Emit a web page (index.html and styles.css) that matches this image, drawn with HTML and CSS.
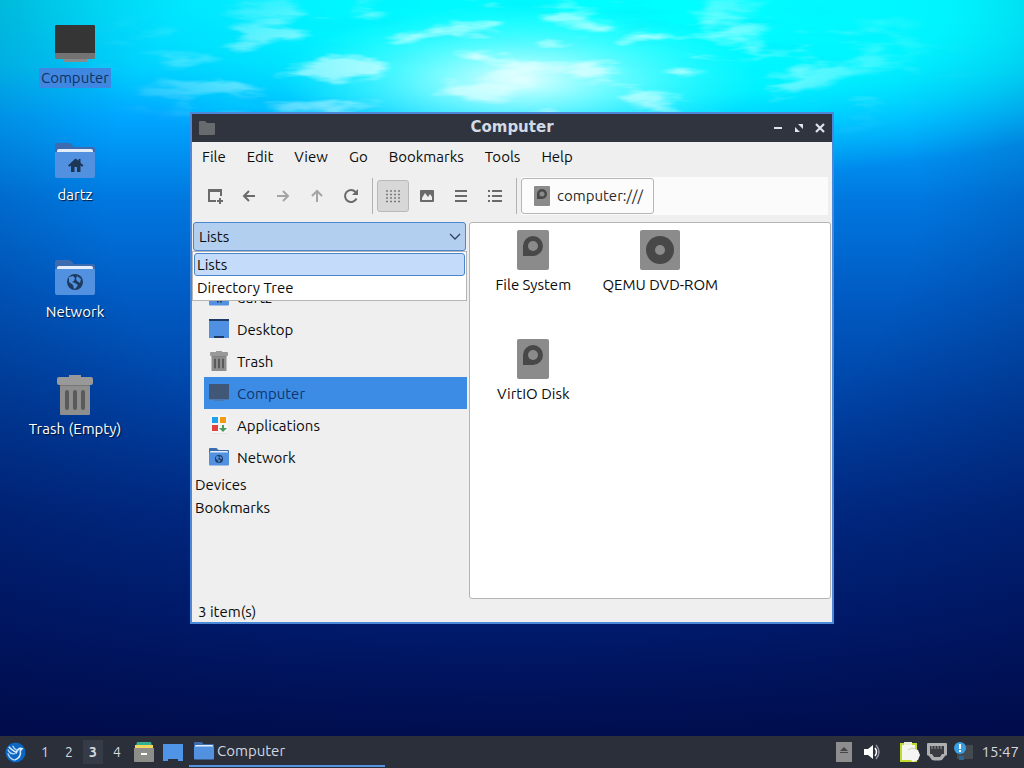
FILE: index.html
```html
<!DOCTYPE html>
<html lang="en">
<head>
<meta charset="utf-8">
<title>Computer</title>
<link rel="stylesheet" href="styles.css">
</head>
<body>
<svg class="sprite" aria-hidden="true">
  <symbol id="computer" viewBox="0 0 40 40">
    <rect x="9" y="35" width="23" height="3" fill="#8a8a8c"/>
    <rect y="1" width="40" height="34" rx="1" fill="#737374"/>
    <path d="M1 1h38l1 1v27H0V2z" fill="#353535"/>
  </symbol>
  <symbol id="folder" viewBox="0 0 40 40">
    <path d="M0 4q0-2 2-2h12q2 0 3 2l2 2h19q2 0 2 2v10H0z" fill="#3d6bb0"/>
    <path d="M2 10q0-2 2-2h32q2 0 2 2v4H2z" fill="#e4eefa"/>
    <path d="M0 11h40v24q0 2-2 2H2q-2 0-2-2z" fill="#5290e0"/>
  </symbol>
  <symbol id="home" viewBox="0 0 40 40">
    <use href="#folder"/>
    <path d="M20.500 17.500 13 24.500l1.500 1.300L16 24.500V31h3.500v-5h2.500v5h3.500v-6.500l1.500 1.300 1.500-1.300-3-2.800V18h-2v1.700z" fill="#1c3654"/>
  </symbol>
  <symbol id="net-folder" viewBox="0 0 40 40">
    <use href="#folder"/>
    <circle cx="20" cy="24" r="8" fill="#1c3a5e"/>
    <path d="M14 19l4-1 2 2-1 3-2 1 3 1 3 2-2 3-2 1-1-4-4-3zM22 18l4 3-1 4-3-2-1-2z" fill="#5290e0"/>
  </symbol>
  <symbol id="trash" viewBox="0 0 40 40">
    <path d="M14 0h12v3H14zM2 4q0-2 2-2h32q2 0 2 2v4q0 2-2 2H4q-2 0-2-2z" fill="#999"/>
    <path d="M5 10h30v29q0 1-1 1H6q-1 0-1-1z" fill="#8e8e8e"/>
    <path d="M5 10h30v1H5z" fill="#777"/>
    <path d="M12 17v16M20 17v16M28 17v16" stroke="#5a5a5a" stroke-width="4" stroke-linecap="round"/>
  </symbol>
  <symbol id="drive" viewBox="0 0 40 40">
    <rect x="4" width="32" height="40" rx="2" fill="#8b8b8b"/>
    <path d="M10 26V16a10 10 0 1 1 10 10z" fill="#484848"/>
    <circle cx="20" cy="16" r="5" fill="#8b8b8b"/>
  </symbol>
  <symbol id="disc" viewBox="0 0 40 40">
    <rect width="40" height="40" rx="2" fill="#8b8b8b"/>
    <circle cx="20" cy="20" r="14" fill="#484848"/>
    <circle cx="20" cy="20" r="5" fill="#8b8b8b"/>
  </symbol>
</svg>

<main class="desktop">
  <svg class="wallpaper" viewBox="0 0 1024 738" preserveAspectRatio="none" aria-hidden="true">
    <defs>
      <linearGradient id="sea" x1="0" y1="0" x2="0" y2="1">
        <stop offset="0" stop-color="#00e4ff"/>
        <stop offset=".09" stop-color="#00ccff"/>
        <stop offset=".16" stop-color="#00a6ff"/>
        <stop offset=".27" stop-color="#0078e0"/>
        <stop offset=".4" stop-color="#005cc4"/>
        <stop offset=".55" stop-color="#0042a4"/>
        <stop offset=".7" stop-color="#002c88"/>
        <stop offset=".86" stop-color="#001e74"/>
        <stop offset="1" stop-color="#001158"/>
      </linearGradient>
      <radialGradient id="aqua" gradientUnits="userSpaceOnUse" cx="0" cy="0" r="1" gradientTransform="translate(640 10) scale(620 170)">
        <stop offset="0" stop-color="#00ffff"/>
        <stop offset=".5" stop-color="#00f8ff" stop-opacity=".9"/>
        <stop offset="1" stop-color="#00e0ff" stop-opacity="0"/>
      </radialGradient>
      <radialGradient id="sun" gradientUnits="userSpaceOnUse" cx="0" cy="0" r="1" gradientTransform="translate(520 80) scale(240 76)">
        <stop offset="0" stop-color="#e4ffff"/>
        <stop offset=".35" stop-color="#a8ffff" stop-opacity=".7"/>
        <stop offset="1" stop-color="#50ffff" stop-opacity="0"/>
      </radialGradient>
      <radialGradient id="depth" gradientUnits="userSpaceOnUse" cx="0" cy="0" r="1" gradientTransform="translate(512 200) scale(900 700)">
        <stop offset=".45" stop-color="#00063c" stop-opacity="0"/>
        <stop offset="1" stop-color="#00063c" stop-opacity=".55"/>
      </radialGradient>
      <radialGradient id="reach" gradientUnits="userSpaceOnUse" cx="0" cy="0" r="1" gradientTransform="translate(520 64) scale(460 104)">
        <stop offset="0" stop-color="#fff"/>
        <stop offset=".5" stop-color="#aaa"/>
        <stop offset="1" stop-color="#000"/>
      </radialGradient>
      <mask id="surface"><rect width="1024" height="180" fill="url(#reach)"/></mask>
      <filter id="ripple" x="0" y="0" width="100%" height="100%">
        <feTurbulence type="fractalNoise" baseFrequency=".013 .05" numOctaves="5" seed="4"/>
        <feColorMatrix values="0 0 0 0 .75  0 0 0 0 1  0 0 0 0 1  5 0 0 0 -2.6"/>
        <feGaussianBlur stdDeviation="2 .8"/>
      </filter>
      <filter id="trough" x="0" y="0" width="100%" height="100%">
        <feTurbulence type="fractalNoise" baseFrequency=".012 .06" numOctaves="5" seed="21"/>
        <feColorMatrix values="0 0 0 0 0  0 0 0 0 .82  0 0 0 0 .95  4 0 0 0 -2"/>
        <feGaussianBlur stdDeviation="2 .8"/>
      </filter>
    </defs>
    <rect width="1024" height="738" fill="url(#sea)"/>
    <rect width="1024" height="738" fill="url(#depth)"/>
    <rect width="1024" height="180" fill="url(#aqua)"/>
    <g mask="url(#surface)">
      <rect width="1024" height="180" filter="url(#trough)" opacity=".5"/>
    </g>
    <rect width="1024" height="180" fill="url(#sun)"/>
    <g mask="url(#surface)">
      <rect width="1024" height="180" filter="url(#ripple)" opacity=".85"/>
    </g>
  </svg>

  <ul class="shortcuts">
    <li class="shortcut selected"><svg><use href="#computer"/></svg><span>Computer</span></li>
    <li class="shortcut"><svg><use href="#home"/></svg><span>dartz</span></li>
    <li class="shortcut"><svg><use href="#net-folder"/></svg><span>Network</span></li>
    <li class="shortcut"><svg><use href="#trash"/></svg><span>Trash (Empty)</span></li>
  </ul>

  <section class="window">
    <header class="titlebar">
      <svg class="app-icon" viewBox="0 0 16 16"><path d="M0 2q0-1 1-1h5l2 2h7q1 0 1 1v10q0 1-1 1H1q-1 0-1-1z" fill="#686b6e"/></svg>
      <h1>Computer</h1>
      <div class="controls">
        <button aria-label="Minimize"><svg viewBox="0 0 10 10"><path d="M1 5h8" stroke="#dfe3ea" stroke-width="2"/></svg></button>
        <button aria-label="Maximize"><svg viewBox="0 0 10 10"><path d="M4 1h5v5zM1 4v5h5z" fill="#dfe3ea"/></svg></button>
        <button aria-label="Close"><svg viewBox="0 0 10 10"><path d="M1 1l8 8M9 1L1 9" stroke="#dfe3ea" stroke-width="2.200"/></svg></button>
      </div>
    </header>

    <nav class="menubar">
      <button>File</button><button>Edit</button><button>View</button><button>Go</button><button>Bookmarks</button><button>Tools</button><button>Help</button>
    </nav>

    <div class="toolbar">
      <button class="tool" aria-label="New tab"><svg viewBox="0 0 16 16"><path d="M14 8V2H2v11h7" fill="none" stroke="#6a6a6a" stroke-width="2"/><path d="M1 1h14v3H1z" fill="#6a6a6a"/><path d="M13 10v6M10 13h6" stroke="#6a6a6a" stroke-width="2"/></svg></button>
      <button class="tool" aria-label="Back"><svg viewBox="0 0 16 16"><path d="M14 8H3M8 3L3 8l5 5" fill="none" stroke="#6a6a6a" stroke-width="2"/></svg></button>
      <button class="tool" aria-label="Forward"><svg viewBox="0 0 16 16"><path d="M2 8h11M8 3l5 5-5 5" fill="none" stroke="#a4a4a4" stroke-width="2"/></svg></button>
      <button class="tool" aria-label="Up"><svg viewBox="0 0 16 16"><path d="M8 14V3M3 8l5-5 5 5" fill="none" stroke="#a4a4a4" stroke-width="2"/></svg></button>
      <button class="tool" aria-label="Reload"><svg viewBox="0 0 16 16"><path d="M13.500 10.500A6 6 0 1 1 12.500 4" fill="none" stroke="#6a6a6a" stroke-width="2"/><path d="M15 1v6H9z" fill="#6a6a6a"/></svg></button>
      <span class="divider"></span>
      <button class="tool active" aria-label="Icon view"><svg viewBox="0 0 16 16"><path d="M1 3h14M1 6.500h14M1 10h14M1 13.500h14" stroke="#7c7c7c" stroke-dasharray="2 2" stroke-width="1.600"/></svg></button>
      <button class="tool" aria-label="Thumbnail view"><svg viewBox="0 0 16 16"><path fill-rule="evenodd" d="M2 2h12q1 0 1 1v10q0 1-1 1H2q-1 0-1-1V3q0-1 1-1zM3 12h10v-3l-2-3-2 3-3-4-3 5z" fill="#6a6a6a"/></svg></button>
      <button class="tool" aria-label="Compact view"><svg viewBox="0 0 16 16"><path d="M2 3h12M2 8h12M2 13h12" stroke="#6a6a6a" stroke-width="2"/></svg></button>
      <button class="tool" aria-label="Detailed list"><svg viewBox="0 0 16 16"><path d="M1 3h2M5 3h10M1 8h2M5 8h10M1 13h2M5 13h10" stroke="#6a6a6a" stroke-width="2"/></svg></button>
      <span class="divider"></span>
      <div class="pathbar"><button class="crumb"><svg><use href="#drive"/></svg>computer:///</button></div>
    </div>

    <div class="content">
      <aside class="side">
        <div class="picker">
          <select aria-label="Side pane mode"><option>Lists</option><option>Directory Tree</option></select>
          <svg class="chevron" viewBox="0 0 12 8"><path d="M1 1l5 5 5-5" fill="none" stroke="#2b4664" stroke-width="1.300"/></svg>
          <ul class="popup" role="listbox" aria-label="Side pane modes">
            <li role="option" aria-selected="true" class="current">Lists</li>
            <li role="option" aria-selected="false">Directory Tree</li>
          </ul>
        </div>
        <ul class="places">
          <li><svg><use href="#home"/></svg>dartz</li>
          <li><svg viewBox="0 0 20 20"><path d="M0 1h20v18H0z" fill="#4f90e2"/><path d="M0 0h20v2H0zM5 17h10v2H5z" fill="#1c3a66"/></svg>Desktop</li>
          <li><svg><use href="#trash"/></svg>Trash</li>
          <li class="selected"><svg viewBox="0 0 20 20"><path d="M0 1h20v15H0z" fill="#415777"/><path d="M0 16h20v1H0zM5 17h10v1H5z" fill="#4b79b3"/></svg>Computer</li>
          <li><svg viewBox="0 0 20 20"><rect x="1" y="1" width="18" height="18" rx="2" fill="#e3e3e3"/><rect x="1" width="18" height="18" rx="2" fill="#f4f4f4"/><path d="M3 2h6v6H3z" fill="#1aa3ec"/><path d="M11 2h6v6h-6z" fill="#f39a14"/><path d="M3 10h6v6H3z" fill="#e0453f"/><path d="M13 10h2v3h3l-4 4-4-4h3z" fill="#4a9a5c"/></svg>Applications</li>
          <li><svg><use href="#net-folder"/></svg>Network</li>
        </ul>
        <ul class="groups"><li>Devices</li><li>Bookmarks</li></ul>
      </aside>
      <ul class="files">
        <li><svg><use href="#drive"/></svg>File System</li>
        <li><svg><use href="#disc"/></svg>QEMU DVD-ROM</li>
        <li><svg><use href="#drive"/></svg>VirtIO Disk</li>
      </ul>
    </div>
    <footer class="status">3 item(s)</footer>
  </section>
</main>

<footer class="panel">
  <button class="launcher menu" aria-label="Application menu"><svg viewBox="0 0 22 22"><circle cx="11" cy="11" r="10.500" fill="#0c66c2"/><path d="M4 5c2 3 5 4 8 6 1-3 3-5 6-4l-2 2c1 5-1 8-6 10" fill="none" stroke="#dcecfb" stroke-width="1.600"/><path d="M3 8c2 4 5 5 8 4M8 4c1 3 3 4 5 5M3 12c1 4 3 6 7 7" fill="none" stroke="#b4d6f6" stroke-width="1.400"/></svg></button>
  <nav class="pager"><button>1</button><button>2</button><button class="current">3</button><button>4</button></nav>
  <button class="launcher" aria-label="File manager"><svg viewBox="0 0 20 20"><path d="M3 0h14l1 4H2z" fill="#35b08f"/><path d="M1 3h18v3H1z" fill="#f3d65b"/><path d="M0 6h20v13q0 1-1 1H1q-1 0-1-1z" fill="#8d8d8a"/><path d="M7 11h6v2H7z" fill="#fff"/></svg></button>
  <button class="launcher desk" aria-label="Show desktop"><svg viewBox="0 0 20 20"><path d="M0 2h20v17h-5v-2H5v2H0z" fill="#4f94e6"/></svg></button>
  <button class="task"><svg><use href="#folder"/></svg>Computer</button>
  <div class="tray">
    <svg class="eject" viewBox="0 0 16 20"><path d="M0 0h16v20H0z" fill="#8e8e8e"/><path d="M8 5l4 4H4zM4 10h8v1H4z" fill="#454545"/></svg>
    <svg class="volume" viewBox="0 0 16 16"><path d="M0 5h4l5-4v14l-5-4H0z" fill="#fff"/><path d="M11 4q3 4 0 8" fill="none" stroke="#fff" stroke-width="1.500"/><path d="M12 1q6 7 0 14" fill="none" stroke="#8d929b" stroke-width="1.500"/></svg>
    <svg viewBox="0 0 20 20"><path d="M0 1h17v19H0z" fill="#c4d92e"/><path d="M2 3h13v15H2z" fill="#f5f6ee"/><path d="M4 0h8v3H4z" fill="#e9ebdc"/><path d="M8 8l4-2 6 2 2 5-2 5-5 2-5-5z" fill="#f4f5f4"/><path d="M8 8l4-2 4 1" fill="none" stroke="#c6cabf"/></svg>
    <svg viewBox="0 0 20 20"><path d="M1 1h18q1 0 1 1v11l-2 1-3 4q-5 1-10 0l-3-4-2-1V2q0-1 1-1z" fill="#adafb0"/><path d="M3 4h14v8h-2l-2 3H7l-2-3H3z" fill="#393d42"/><path d="M5 4v3M8 4v3M11 4v3M14 4v3" stroke="#9a9c9d"/></svg>
    <svg viewBox="0 0 20 20"><path d="M3 3h16v14H3z" fill="#444b50"/><path d="M5 14h5v4H5z" fill="#2c6591"/><circle cx="6" cy="6" r="6" fill="#3a9fe0"/><path d="M6 2v5M6 8v2" stroke="#fff" stroke-width="2"/></svg>
    <time>15:47</time>
  </div>
</footer>
</body>
</html>
```

FILE: styles.css
```css
* { box-sizing: border-box; }
body {
  margin: 0;
  min-height: 100vh;
  display: flex;
  flex-direction: column;
  font: 15px/20px "Ubuntu", "Noto Sans", "Open Sans", sans-serif;
  color: #0c0c0c;
}
ul { list-style: none; margin: 0; padding: 0; }
button, select { font: inherit; color: inherit; border: 0; background: none; padding: 0; margin: 0; }
svg { display: block; flex: none; }
.sprite { position: absolute; width: 0; height: 0; }

.desktop { flex: 1; position: relative; background: #00257a; }
.wallpaper { position: absolute; inset: 0; width: 100%; height: 100%; }

.shortcuts {
  position: relative;
  display: flex;
  flex-direction: column;
  width: 150px;
  padding-top: 24px;
}
.shortcut {
  display: flex;
  flex-direction: column;
  align-items: center;
  gap: 4px;
  height: 117px;
  color: #fff;
  text-shadow: 1px 1px 1px #001230;
}
.shortcut svg { width: 40px; height: 40px; }
.shortcut span { padding: 0 2px; }
.shortcut.selected span { background: #3f87e0; color: #123160; text-shadow: none; }

.window {
  position: absolute;
  top: 112px;
  bottom: 112px;
  left: 190px;
  right: 190px;
  display: flex;
  flex-direction: column;
  border: 2px solid #4c88d8;
  background: #efefef;
}
.titlebar {
  display: grid;
  grid-template-columns: 1fr auto 1fr;
  align-items: center;
  height: 28px;
  padding: 0 7px;
  background: #2f343f;
  color: #d3dae3;
}
.titlebar h1 { margin: 0; padding-bottom: 2px; font: bold 15px/20px "DejaVu Sans", sans-serif; }
.app-icon { width: 16px; height: 16px; }
.controls { display: flex; justify-content: flex-end; gap: 11px; }
.controls svg { width: 10px; height: 10px; }

.menubar { display: flex; height: 30px; flex: none; }
.menubar button { padding: 0 11px 0 10px; }

.toolbar { display: flex; align-items: center; gap: 2px; height: 48px; padding: 0 4px 0 7px; flex: none; }
.tool { width: 32px; height: 32px; display: grid; place-items: center; border-radius: 3px; }
.tool svg { width: 16px; height: 16px; }
.tool.active { background: #d7d7d7; border: 1px solid #b9b9b9; }
.divider { width: 1px; height: 36px; margin: 0 2px 0 3px; background: #b2b2b2; }
.pathbar { flex: 1; display: flex; height: 38px; padding: 1px 0; background: #fbfbfb; }
.crumb {
  display: flex;
  align-items: center;
  gap: 5px;
  padding: 0 10px;
  border: 1px solid #b6b6b6;
  border-radius: 3px;
  background: #fcfcfc;
  color: #2a2a2a;
}
.crumb svg { width: 20px; height: 20px; }

.content { flex: 1; display: grid; grid-template-columns: 43% 1fr; gap: 2px; padding: 2px 1px 0 0; min-height: 0; }
.side { min-width: 0; }
.picker { position: relative; padding: 0 1px; }
.picker select {
  display: block;
  appearance: none;
  width: 100%;
  height: 29px;
  padding: 0 5px;
  border: 1px solid #4a86cf;
  border-radius: 3px;
  background: #b3cfef;
}
.chevron { position: absolute; right: 6px; top: 11px; width: 12px; height: 8px; }
.popup {
  position: absolute;
  top: 100%;
  left: 0;
  right: 0;
  padding: 1px;
  border: 1px solid #b4b4b4;
  background: #fff;
}
.popup li { height: 23px; line-height: 22px; padding: 0 2px; border: 1px solid transparent; }
.popup .current { background: #c4dcfa; border-color: #4a86cf; border-radius: 3px; }
.places { padding: 30px 0 0 12px; }
.places li { display: flex; align-items: center; gap: 8px; height: 32px; line-height: 21px; padding-left: 5px; }
.places svg { width: 20px; height: 20px; }
.places .selected { background: #3c8ce6; color: #12356c; }
.groups li { height: 23px; line-height: 23px; padding-left: 3px; }

.files {
  display: grid;
  grid-template-columns: repeat(auto-fill, 127px);
  grid-auto-rows: 109px;
  align-content: start;
  padding-top: 7px;
  border: 1px solid #b4b4b4;
  border-radius: 3px;
  background: #fff;
}
.files li { display: flex; flex-direction: column; align-items: center; gap: 5px; }
.files svg { width: 40px; height: 40px; }
.status { height: 23px; line-height: 25px; padding-left: 6px; flex: none; }

.panel {
  display: flex;
  align-items: center;
  height: 32px;
  padding: 0 5px;
  background: #2a2f39;
  color: #d3d8e0;
}
.launcher svg { width: 20px; height: 20px; }
.launcher.menu svg { width: 21px; height: 21px; }
.launcher.desk { margin: 0 6px 0 9px; }
.pager { display: flex; align-items: center; gap: 4px; margin: 0 7px 0 9px; }
.pager button { width: 20px; height: 24px; font-size: 14px; }
.pager .current { background: #353b47; font-weight: bold; }
.task {
  display: flex;
  align-items: center;
  gap: 3px;
  width: 196px;
  height: 30px;
  padding-left: 5px;
  border-bottom: 2px solid #5294e2;
}
.task svg { width: 20px; height: 20px; }
.tray { display: flex; align-items: center; gap: 7px; margin-left: auto; }
.tray svg { width: 20px; height: 20px; }
.tray .eject { width: 16px; margin-right: 5px; }
.tray .volume { width: 16px; height: 16px; margin-right: 13px; }
```
